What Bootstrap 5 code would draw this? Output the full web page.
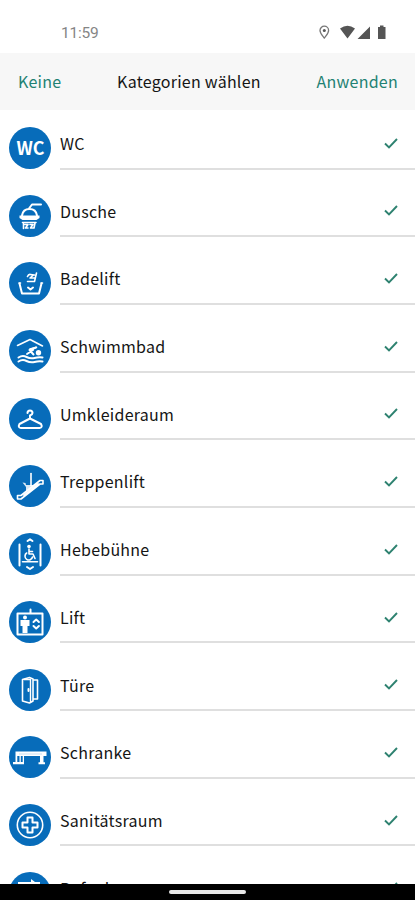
<!DOCTYPE html>
<html lang="de">
<head>
<meta charset="utf-8">
<meta name="viewport" content="width=device-width, initial-scale=1">
<title>Kategorien wählen</title>
<link href="https://cdn.jsdelivr.net/npm/bootstrap@5.3.0/dist/css/bootstrap.min.css" rel="stylesheet">
<style>
body{font-family:"Noto Sans CJK SC","Noto Sans",sans-serif;font-size:16px;letter-spacing:.25px;color:#151515;background:#fff}
.screen{height:900px}
.statusbar{height:53px;padding:13px 28px 0 61px}
.clock{font-family:Roboto,sans-serif;font-size:15.5px;letter-spacing:-.2px;color:#858585;padding-top:1px}
.topbar{height:57px;background:#f7f7f7;padding:0 17px 1px 18px}
.topbar button{color:#1f8273;letter-spacing:inherit;font-size:inherit}
.cat{height:67.7px;padding-left:9px}
.cat>svg{width:42px;height:42px;margin-top:17px}
.cat-body{margin-left:9px;height:59.5px;border-bottom:2px solid #dfdfdf;padding:0 16px 0 0}
.cat-body span{line-height:24px;margin-top:21px}
.cat-body svg{margin-top:26.700px}
.navbar-sys{height:16px;background:#000}
.pill{width:77px;height:4px;background:#e8e8e8}
.ln{fill:none;stroke:#fff;stroke-width:1.6;stroke-linecap:round;stroke-linejoin:round}
.bold-ln{stroke-width:2}
.thin-ln{stroke-width:1.4}
</style>
<script src="https://cdn.jsdelivr.net/npm/bootstrap@5.3.0/dist/js/bootstrap.bundle.min.js"></script>
</head>
<body>
<div class="screen d-flex flex-column overflow-hidden">
<div class="statusbar d-flex justify-content-between align-items-center flex-shrink-0">
<span class="clock">11:59</span>
<svg width="70" height="18" viewBox="317 24 70 18"><path d="M324.300 38C322 35 320 33.200 320 30.500a4.300 4.300 0 0 1 8.600 0c0 2.700-2 4.500-4.300 7.500z" fill="none" stroke="#777" stroke-width="1.300"/><circle cx="324.300" cy="30.500" r="1.500" fill="#555"/><path d="M340 28.500q7.500-5.500 15 0L347.500 38.500z M357.500 39L370 26.500V39z M378 27h2v-1.500h3.500V27h2v12H378z" fill="#555"/></svg>
</div>
<header class="topbar d-flex justify-content-between align-items-center flex-shrink-0">
<button class="btn p-0 border-0">Keine</button><span>Kategorien wählen</span><button class="btn p-0 border-0">Anwenden</button>
</header>
<main class="flex-grow-1 overflow-hidden" id="list"></main>
<footer class="navbar-sys d-flex justify-content-center align-items-center flex-shrink-0"><div class="pill rounded-pill"></div></footer>
</div>
<script>
const cats=[
['WC','<text x="21.500" y="27.500" text-anchor="middle" fill="#fff" font-size="18" font-weight="700" letter-spacing="0" textLength="28" lengthAdjust="spacingAndGlyphs">WC</text>'],
['Dusche','<path class="ln bold-ln" d="M32 9.500h-9l-3 4M13 20.500q1-6.500 7.500-6.500t7.500 6.500"/><path d="M10.500 20.500h20V23l-3 2h-14l-3-2z" fill="#fff"/><path class="ln" d="M13.500 27.500h13.500M14.500 27.500v6M16 29.500h3l-2.500 3.500H19M21 29.500h3l-2.500 3.500H25l1-5"/>'],
['Badelift','<path class="ln bold-ln" d="M10.500 21.500l2.500 10h17l2.500-10"/><path class="ln" d="M10 21h1.500M32 21h1.500M18.500 14.500q1-2.500 3-2t4 .5M27.500 11l-2 8.500H18.500M24.500 13l-3.500 3h4.500"/><path class="ln bold-ln" d="M19 25.500l2.500 2 2.500-2"/>'],
['Schwimmbad','<path class="ln" d="M8.500 15.500L21 9.500l12.500 6.500M21 19l6.500-1.800"/><path class="ln bold-ln" d="M27 17.500L20.500 20l4 4.500M24 20l-6 4"/><circle cx="29.500" cy="22.800" r="2.700" fill="#fff"/><path class="ln bold-ln" d="M9.500 27.500q4-2.500 8-.5t8 1 8-.5M9.500 31.500q4-2.500 8-.5t8 1 8-.5"/>'],
['Umkleideraum','<path class="ln bold-ln" d="M18.500 15q0-2.500 2.500-2.500t2.500 2.500q0 1.500-2.500 2.500v3L10.500 26q-2 3.500 1.500 4h18.500q3.500-.5 1.500-4L21 20.500"/>'],
['Treppenlift','<path class="ln" d="M22 8.500v12"/><path d="M13.500 17.500l3 .5.500 2H24v2.500l-7 4.500v-5z" fill="#fff" opacity=".85"/><path class="ln" d="M8.500 30.500h3.500L31 15.500h3v3.500h-3L12 34H8.500zM15 30.500L29.500 19"/>'],
['Hebebühne','<path class="ln bold-ln" d="M10.500 11.500v21M31.500 11.500v21"/><path class="ln" d="M13.500 28.800h15"/><path class="ln bold-ln" d="M18.500 8l2.500-1.700L23.500 8M18 34l3 2 3-2"/><circle cx="20" cy="13.500" r="1.800" fill="#fff"/><path class="ln" d="M20 16v5h4l2 4.500M20 18.500h3.500M17.700 20a3.800 3.800 0 1 0 5.800 4"/>'],
['Lift','<path class="ln bold-ln" stroke-linejoin="miter" d="M8.500 12.500h25v21h-25zM21.500 8.500v4"/><circle cx="16" cy="16.500" r="2" fill="#fff"/><path d="M11.500 19h9v6h-2v7h-5v-7h-2z" fill="#fff"/><path class="ln bold-ln" d="M24.500 21l2.700-2.500 2.700 2.500M24.500 25l2.700 2.500 2.700-2.500"/>'],
['Türe','<path class="ln" d="M13.500 10.500l7-2 3.500 1.500v22l-3.500 2-7-2zM24 11h4.500v19H24"/><path class="ln thin-ln" d="M15 10.500h6.500v22"/><path class="ln bold-ln" d="M19.500 20v2"/>'],
['Schranke','<path d="M6.500 15.500h31v4.500h-31zM6.500 16h1.800v10H6.500zM10.500 19h1.300v7h-1.300zM13.700 19H15v7h-1.300zM4 26h11v2.200H4zM31 19h3.500v7.200H36v2h-6.500v-2H31z" fill="#fff"/><path d="M10 18h23" stroke="#c8dff2"/>'],
['Sanitätsraum','<circle class="ln" cx="21" cy="21" r="12.700"/><path class="ln bold-ln" d="M18.500 13.500h5v5h5v5h-5v5h-5v-5h-5v-5h5z"/>'],
['Rufanlage','<path d="M9 10h13V7l4 3h5v7H9z" fill="#fff"/><path d="M12 12h10l2 4H12z" fill="#076cba"/>']];
document.getElementById('list').innerHTML=cats.map(([n,i])=>`<div class="cat d-flex"><svg class="flex-shrink-0" viewBox="0 0 42 42"><circle cx="21" cy="21" r="21" fill="#076cba"/>${i}</svg><div class="cat-body flex-grow-1 d-flex justify-content-between align-items-start"><span>${n}</span><svg width="16" height="14" viewBox="0 0 16 14"><path d="M2 6.500l4 4L14 2" fill="none" stroke="#2e8270" stroke-width="1.900"/></svg></div></div>`).join('');
</script>
</body>
</html>
